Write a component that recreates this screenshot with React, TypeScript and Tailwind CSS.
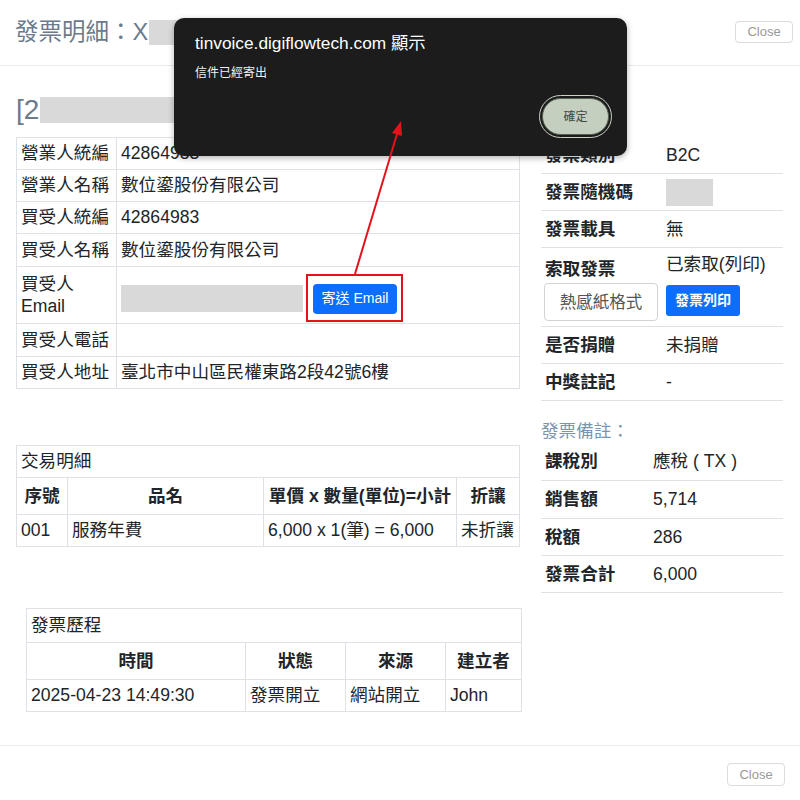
import React from 'react'

const font = { fontFamily: '"Liberation Sans", "Noto Sans CJK TC", sans-serif' }

const Gray = ({ className }: { className: string }) => <div className={"bg-[#d9d9d9] " + className} />

const RightRow = ({ label, children }: { label: string; children: React.ReactNode }) => (
    <div className="flex h-[37px] items-center border-b border-[#dee2e6]">
        <div className="w-[125px] pl-[4px] font-bold">{label}</div>
        <div className="flex-1">{children}</div>
    </div>
)

const App = () => {
    const td = "border border-[#dee2e6] px-[4px] align-middle"
    return (
        <div className="relative flex h-[800px] w-[800px] flex-col bg-white text-[17.6px] text-[#212529]" style={font}>
            {/* header */}
            <div className="flex h-[66px] shrink-0 items-center justify-between border-b border-[#e9ecef] pl-[15px] pr-[7px]">
                <div className="flex items-center text-[23.5px] text-[#6b7b8c]">
                    發票明細：X<Gray className="ml-[1px] h-[25px] w-[40px]" />
                </div>
                <button className="mt-[-2px] h-[22px] w-[58px] rounded-[4px] border border-[#dcdcdc] text-[13px] text-[#999]">Close</button>
            </div>

            {/* body */}
            <div className="flex-1 px-[16px]">
                <div className="mt-[27px] mb-[10px] flex h-[34px] items-center text-[28px] text-[#6b7b8c]">
                    [2<Gray className="ml-[1px] h-[26px] w-[170px]" />
                </div>
                <div className="flex gap-[21px]">
                    {/* left column */}
                    <div className="w-[504px]">
                        <table className="w-[504px] table-fixed border-collapse">
                            <colgroup><col className="w-[100px]" /><col /></colgroup>
                            <tbody>
                                <tr className="h-[32px]"><td className={td}>營業人統編</td><td className={td}>42864983</td></tr>
                                <tr className="h-[32px]"><td className={td}>營業人名稱</td><td className={td}>數位鎏股份有限公司</td></tr>
                                <tr className="h-[32px]"><td className={td}>買受人統編</td><td className={td}>42864983</td></tr>
                                <tr className="h-[33px]"><td className={td}>買受人名稱</td><td className={td}>數位鎏股份有限公司</td></tr>
                                <tr className="h-[57px]">
                                    <td className={td + " leading-[22px]"}>買受人<br />Email</td>
                                    <td className={td}>
                                        <div className="flex items-center gap-[10px] pt-[7px]">
                                            <Gray className="h-[27px] w-[182px]" />
                                            <button className="h-[30px] w-[84px] rounded-[4px] bg-[#0d6efd] text-[14px] text-white">寄送 Email</button>
                                        </div>
                                    </td>
                                </tr>
                                <tr className="h-[33px]"><td className={td}>買受人電話</td><td className={td}></td></tr>
                                <tr className="h-[32px]"><td className={td}>買受人地址</td><td className={td}>臺北市中山區民權東路2段42號6樓</td></tr>
                            </tbody>
                        </table>

                        <table className="mt-[56px] w-[504px] table-fixed border-collapse">
                            <colgroup><col className="w-[51px]" /><col className="w-[196px]" /><col className="w-[193px]" /><col /></colgroup>
                            <tbody>
                                <tr className="h-[32px]"><td colSpan={4} className={td}>交易明細</td></tr>
                                <tr className="h-[37px] font-bold">
                                    <td className={td + " text-center"}>序號</td>
                                    <td className={td + " text-center"}>品名</td>
                                    <td className={td + " text-center whitespace-nowrap"}>單價 x 數量(單位)=小計</td>
                                    <td className={td + " text-center"}>折讓</td>
                                </tr>
                                <tr className="h-[32px]">
                                    <td className={td}>001</td>
                                    <td className={td}>服務年費</td>
                                    <td className={td + " whitespace-nowrap"}>6,000 x 1(筆) = 6,000</td>
                                    <td className={td + " whitespace-nowrap"}>未折讓</td>
                                </tr>
                            </tbody>
                        </table>

                        <table className="mt-[61px] ml-[10px] w-[496px] table-fixed border-collapse">
                            <colgroup><col className="w-[219px]" /><col className="w-[100px]" /><col className="w-[100px]" /><col /></colgroup>
                            <tbody>
                                <tr className="h-[34px]"><td colSpan={4} className={td}>發票歷程</td></tr>
                                <tr className="h-[37px] font-bold">
                                    <td className={td + " text-center"}>時間</td>
                                    <td className={td + " text-center"}>狀態</td>
                                    <td className={td + " text-center"}>來源</td>
                                    <td className={td + " text-center"}>建立者</td>
                                </tr>
                                <tr className="h-[32px]">
                                    <td className={td + " whitespace-nowrap"}>2025-04-23 14:49:30</td>
                                    <td className={td}>發票開立</td>
                                    <td className={td}>網站開立</td>
                                    <td className={td}>John</td>
                                </tr>
                            </tbody>
                        </table>
                    </div>

                    {/* right column */}
                    <div className="w-[242px]">
                        <RightRow label="發票類別">B2C</RightRow>
                        <RightRow label="發票隨機碼"><Gray className="h-[27px] w-[47px]" /></RightRow>
                        <RightRow label="發票載具">無</RightRow>
                        <div className="flex h-[79px] border-b border-[#dee2e6]">
                            <div className="flex w-[125px] flex-col items-start">
                                <div className="mt-[8px] h-[26px] pl-[4px] leading-[26px] font-bold">索取發票</div>
                                <button className="mt-[1px] ml-[3px] h-[38px] w-[114px] rounded-[4px] border border-[#d3d3d3] text-[16.5px] text-[#555]">熱感紙格式</button>
                            </div>
                            <div className="flex flex-1 flex-col items-start">
                                <div className="mt-[4px] h-[24px] leading-[24px] whitespace-nowrap">已索取(列印)</div>
                                <button className="mt-[9px] h-[31px] w-[74px] rounded-[3px] bg-[#0d6efd] text-[14px] font-bold text-white">發票列印</button>
                            </div>
                        </div>
                        <RightRow label="是否捐贈">未捐贈</RightRow>
                        <RightRow label="中獎註記">-</RightRow>
                        <div className="mt-[19px] h-[22px] leading-[22px] text-[#7b94b0]">發票備註：</div>
                        <div className="flex h-[39px] items-center border-b border-[#dee2e6]">
                            <div className="w-[112px] pl-[4px] font-bold">課稅別</div>
                            <div>應稅 ( TX )</div>
                        </div>
                        <div className="flex h-[38px] items-center border-b border-[#dee2e6]">
                            <div className="w-[112px] pl-[4px] font-bold">銷售額</div>
                            <div>5,714</div>
                        </div>
                        <div className="flex h-[37px] items-center border-b border-[#dee2e6]">
                            <div className="w-[112px] pl-[4px] font-bold">稅額</div>
                            <div>286</div>
                        </div>
                        <div className="flex h-[37px] items-center border-b border-[#dee2e6]">
                            <div className="w-[112px] pl-[4px] font-bold">發票合計</div>
                            <div>6,000</div>
                        </div>
                    </div>
                </div>
            </div>

            {/* footer */}
            <div className="flex h-[55px] shrink-0 justify-end border-t border-[#e9ecef] pt-[17px] pr-[15px]">
                <button className="h-[23px] w-[58px] rounded-[4px] border border-[#dcdcdc] text-[13px] text-[#999]">Close</button>
            </div>

            {/* browser alert */}
            <div className="absolute top-[18px] left-[174px] h-[138px] w-[453px] rounded-[10px] bg-[#1c1c1c] shadow-[0_2px_6px_rgba(0,0,0,0.3)]">
                <div className="mt-[14px] ml-[21px] text-[17.3px] leading-[22px] text-white">tinvoice.digiflowtech.com 顯示</div>
                <div className="mt-[10px] ml-[21px] text-[12px] text-[#f0f0f0]">信件已經寄出</div>
                <div className="absolute top-[77px] right-[15px] rounded-full border-[1.5px] border-[#c9d2c5] p-[2px]">
                    <div className="flex h-[37px] w-[67px] items-center justify-center rounded-full border border-[#55604f] bg-[#c5cfc0] text-[12px] text-[#3d4a3d]">確定</div>
                </div>
            </div>

            {/* annotation */}
            <div className="absolute top-[274px] left-[306px] h-[48px] w-[97px] border-2 border-[#e3121b]" />
            <svg className="pointer-events-none absolute top-0 left-0" width="800" height="800">
                <line x1="355" y1="274" x2="397" y2="134" stroke="#e3121b" strokeWidth="2" />
                <polygon points="401,121 402,136 392,133" fill="#e3121b" />
            </svg>
        </div>
    )
}

export default App
